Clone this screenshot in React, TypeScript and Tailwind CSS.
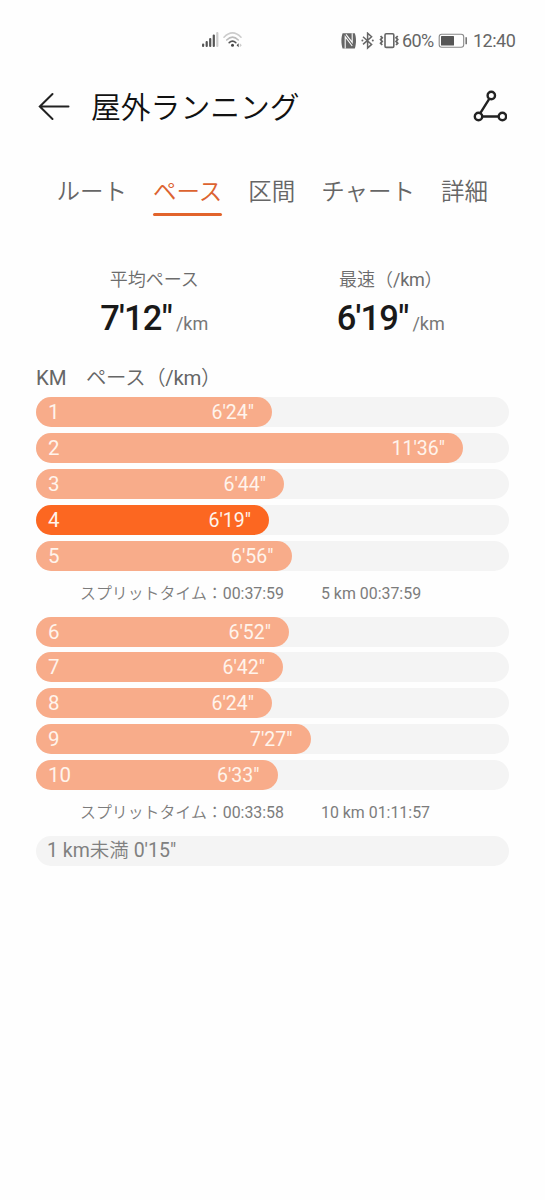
import React from "react";

type Split = { km: number; pace: string; width: number; best?: boolean };

const TABS = ["ルート", "ペース", "区間", "チャート", "詳細"];

const firstHalf: Split[] = [
  { km: 1, pace: "6'24\"", width: 236 },
  { km: 2, pace: "11'36\"", width: 427 },
  { km: 3, pace: "6'44\"", width: 248 },
  { km: 4, pace: "6'19\"", width: 233, best: true },
  { km: 5, pace: "6'56\"", width: 255.5 },
];

const secondHalf: Split[] = [
  { km: 6, pace: "6'52\"", width: 253 },
  { km: 7, pace: "6'42\"", width: 247 },
  { km: 8, pace: "6'24\"", width: 236 },
  { km: 9, pace: "7'27\"", width: 274.5 },
  { km: 10, pace: "6'33\"", width: 241.5 },
];

function StatusBar() {
  return (
    <div className="flex h-[41px] items-end text-[#666]">
      {/* signal + wifi */}
      <svg className="ml-[201px] mb-[-8px]" width="42" height="18" viewBox="0 0 42 18">
        <g fill="#555">
          <rect x="1" y="12.5" width="2.2" height="3.5" rx="1" />
          <rect x="4.6" y="10" width="2.2" height="6" rx="1" />
          <rect x="8.1" y="7" width="2.2" height="9" rx="1" />
          <rect x="11.7" y="3.5" width="2.2" height="12.5" rx="1" />
          <rect x="15.2" y="1" width="2.2" height="15" rx="1" fill="#ccc" />
        </g>
        <g fill="none" strokeLinecap="round" strokeWidth="1.6">
          <path d="M23 6.2Q31.5-2.3 40 6.2" stroke="#ccc" />
          <path d="M25.7 9Q31.5 3.4 37.3 9" stroke="#bbb" />
          <path d="M28.2 11.6Q31.5 8.6 34.8 11.6" stroke="#555" />
        </g>
        <circle cx="31.5" cy="14.2" r="1.5" fill="#444" />
        <path d="M37.6 12.2v4L35.6 14.2z" fill="#444" />
        <path d="M38.8 12.2v4l2-2z" fill="#ccc" />
      </svg>
      {/* nfc, bluetooth, vibrate */}
      <svg className="ml-[97px] mb-[-9px]" width="60" height="18" viewBox="0 0 60 18">
        <path d="M2.6 1.2h12.2c1.6 4 1.6 11 0 15.2H2.6C1 12.2 1 5.2 2.6 1.2z" fill="#666" />
        <path d="M5.2 16.4V4.6l7 9.4M12.2 1.2v9.2L6 2.4" fill="none" stroke="#fefefe" strokeWidth="1.1" />
        <g fill="none" stroke="#666">
          <path d="M23 4.8l8.6 7.6-4 3.6V1.2l4 3.6-8.6 7.6" strokeWidth="1.5" />
          <rect x="45" y="1.8" width="8.8" height="13.6" rx="1.2" strokeWidth="1.6" />
          <path d="M40.6 4l1.6 1.8-1.6 1.8 1.6 1.8-1.6 1.8 1.6 1.8M57.7 4l-1.6 1.8 1.6 1.8-1.6 1.8 1.6 1.8-1.6 1.8" strokeWidth="1.8" />
        </g>
        <circle cx="22.4" cy="8.6" r="1" fill="#666" />
        <circle cx="32.8" cy="8.6" r="1" fill="#666" />
      </svg>
      <span className="ml-[2px] mb-[-10px] w-[36px] text-[18px] leading-5 tracking-[-0.6px]">60%</span>
      <svg className="mb-[-8px]" width="30" height="16" viewBox="0 0 30 16">
        <rect x="1.2" y="1.2" width="24.5" height="13" rx="2.5" fill="none" stroke="#888" strokeWidth="1.1" />
        <rect x="3" y="3" width="13" height="9.4" rx=".5" fill="#555" />
        <path d="M28.2 4.2v7" stroke="#777" strokeWidth="1.6" />
      </svg>
      <span className="ml-[5px] mb-[-10px] text-[18px] leading-5 tracking-[-0.5px]">12:40</span>
    </div>
  );
}

function Header() {
  return (
    <header className="mt-[44px] flex h-[46px] items-center pl-[37px] pr-[38px]">
      <svg className="mb-1" width="34" height="32" viewBox="0 0 34 32" fill="none" stroke="#222" strokeWidth="2">
        <path d="M31.5 16.5H3M15.5 4L2.8 16.5 15.5 29" strokeLinecap="round" />
      </svg>
      <h1 className="ml-5 text-[29.8px] font-[350] leading-[46px] text-[#111]">屋外ランニング</h1>
      <svg className="mb-[5px] ml-auto" width="36" height="34" viewBox="0 0 36 34" fill="none" stroke="#222" strokeWidth="2.4">
        <path d="M18.4 9.6L9 24.6M10 27.5h17.4" />
        <circle cx="20.3" cy="6.5" r="3.7" />
        <circle cx="7.5" cy="27.5" r="3.7" />
        <circle cx="31.4" cy="27.5" r="3.7" />
      </svg>
    </header>
  );
}

function Stat({ label, value }: { label: React.ReactNode; value: string }) {
  return (
    <div className="flex flex-1 flex-col items-center">
      <span className="text-[18px] font-[350] leading-6 text-[#6c6c6c]">{label}</span>
      <div className="mt-[6px] flex items-baseline leading-10">
        <span className="text-[34.5px] font-medium tracking-[-0.8px] text-[#191919]">{value}</span>
        <span className="ml-[4px] text-[18px] text-[#777]">/km</span>
      </div>
    </div>
  );
}

function PaceBar({ split }: { split: Split }) {
  return (
    <li className="h-[30px] rounded-full bg-[#f4f4f4]">
      <div
        className={`flex h-full items-center justify-between rounded-full pl-3 pr-[18px] text-[#fff4ec] ${
          split.best ? "bg-[#fc6721]" : "bg-[#f8ac8a]"
        }`}
        style={{ width: split.width }}
      >
        <span className="text-[20.5px] leading-[30px]">{split.km}</span>
        <span className="mt-[2px] text-[19.5px] leading-[30px]">{split.pace}</span>
      </div>
    </li>
  );
}

function SplitTime({ time, total }: { time: string; total: string }) {
  return (
    <div className="flex h-[46px] items-center pl-[44px] text-[15.9px] text-[#7c7c7c]">
      <span className="w-[241px]">
        <span className="font-[350]">スプリットタイム：</span>
        {time}
      </span>
      <span>{total}</span>
    </div>
  );
}

export default function App() {
  return (
    <div className="h-[1200px] w-[545px] overflow-hidden bg-[#fefefe] font-[Roboto,'Noto_Sans_CJK_JP',sans-serif]">
      <StatusBar />
      <Header />

      <nav className="mt-[44px] flex gap-[26px] pl-[56.5px] text-[23.5px] font-[350] leading-[34px] text-[#666]">
        {TABS.map((tab) => (
          <div
            key={tab}
            className={tab === "ペース" ? "text-[#dc6330]" : ""}
          >
            {tab}
            {tab === "ペース" && <div className="mt-[4px] h-[3px] rounded-full bg-[#e2642c]" />}
          </div>
        ))}
      </nav>

      <section className="mt-[52px] flex px-[36px]">
        <Stat label="平均ペース" value={"7'12\""} />
        <Stat
          label={<>最速（<span className="font-normal tracking-[-0.3px]">/km</span>）</>}
          value={"6'19\""}
        />
      </section>

      <main className="mt-[17px] px-[36px]">
        <div className="flex h-[36px] items-center pb-[2px] text-[20.4px] text-[#666]">
          <span className="w-[50px]">KM</span>
          <span className="font-[350] tracking-[-0.3px]">
            ペース（<span className="font-normal">/km</span>）
          </span>
        </div>
        <ul className="space-y-[5.9px]">
          {firstHalf.map((s) => (
            <PaceBar key={s.km} split={s} />
          ))}
        </ul>
        <SplitTime time="00:37:59" total="5 km 00:37:59" />
        <ul className="space-y-[5.9px]">
          {secondHalf.map((s) => (
            <PaceBar key={s.km} split={s} />
          ))}
        </ul>
        <SplitTime time="00:33:58" total="10 km 01:11:57" />
        <div className="h-[30px] rounded-full bg-[#f4f4f4] pl-[11px] text-[19.5px] leading-[29px] text-[#808080]">
          1 km<span className="font-[350]">未満</span> 0'15"
        </div>
      </main>
    </div>
  );
}
